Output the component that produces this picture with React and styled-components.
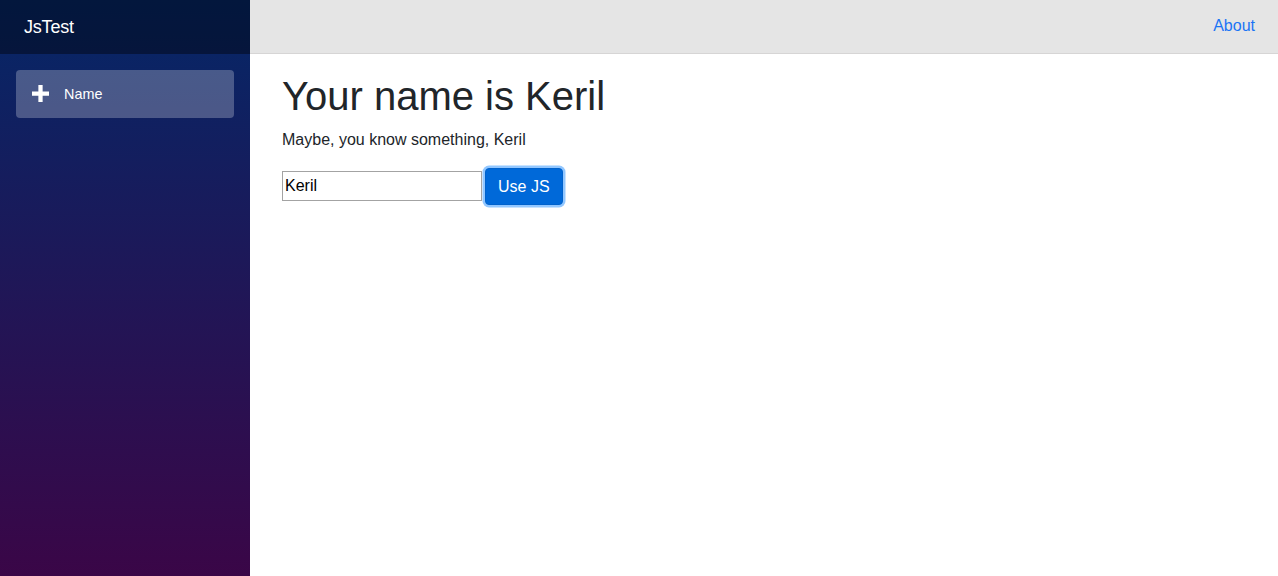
import React, { useState } from 'react'
import styled, { createGlobalStyle } from 'styled-components'

const GlobalStyle = createGlobalStyle`
    html, body {
        margin: 0;
        padding: 0;
        height: 100%;
    }

    body {
        font-family: "Liberation Sans", Arial, sans-serif;
        color: #212529;
        background: #fff;
    }

    #root {
        height: 100%;
    }
`

export default function App() {
    const [name, setName] = useState('Keril')

    return (
        <Page>
            <GlobalStyle />
            <Sidebar>
                <BrandRow>
                    <Brand href="#">JsTest</Brand>
                </BrandRow>
                <Nav>
                    <NavItem>
                        <NavLink href="#" $active>
                            <PlusIcon viewBox="0 0 8 8">
                                <path d="M3 0v3h-3v2h3v3h2v-3h3v-2h-3v-3h-2z" fill="currentColor" />
                            </PlusIcon>
                            Name
                        </NavLink>
                    </NavItem>
                </Nav>
            </Sidebar>

            <Main>
                <TopRow>
                    <AboutLink href="#">About</AboutLink>
                </TopRow>
                <Content>
                    <Heading>Your name is {name}</Heading>
                    <Lead>Maybe, you know something, {name}</Lead>
                    <Form>
                        <NameInput value={name} onChange={e => setName(e.target.value)} />
                        <PrimaryButton type="button">Use JS</PrimaryButton>
                    </Form>
                </Content>
            </Main>
        </Page>
    )
}

const Page = styled.div`
    display: flex;
    height: 100vh;
    overflow: hidden;
`

const Sidebar = styled.div`
    width: 250px;
    flex-shrink: 0;
    display: flex;
    flex-direction: column;
    background-image: linear-gradient(180deg, rgb(5, 39, 103) 0%, #3a0647 100%);
`

const BrandRow = styled.div`
    height: 54px;
    display: flex;
    align-items: center;
    padding-left: 24px;
    background-color: rgba(0, 0, 0, 0.4);
`

const Brand = styled.a`
    color: #fff;
    font-size: 18px;
    letter-spacing: -0.2px;
    text-decoration: none;
`

const Nav = styled.ul`
    list-style: none;
    margin: 0;
    padding: 16px 16px 8px;
`

const NavItem = styled.li`
    font-size: 14.4px;
`

const NavLink = styled.a`
    display: flex;
    align-items: center;
    height: 48px;
    padding-left: 16px;
    border-radius: 4px;
    color: ${({ $active }) => ($active ? '#fff' : '#d7d7d7')};
    background: ${({ $active }) => ($active ? 'rgba(255, 255, 255, 0.25)' : 'none')};
    text-decoration: none;
`

const PlusIcon = styled.svg`
    width: 17px;
    height: 17px;
    margin-right: 15px;
    margin-top: -1px;
    color: #fff;
`

const Main = styled.div`
    flex: 1;
    display: flex;
    flex-direction: column;
    min-width: 0;
`

const TopRow = styled.div`
    height: 54px;
    box-sizing: border-box;
    display: flex;
    align-items: center;
    justify-content: flex-end;
    padding: 0 23px 2px;
    background: #e5e5e5;
    border-bottom: 1px solid #d6d5d5;
`

const AboutLink = styled.a`
    color: #1b74f5;
    font-size: 16px;
    text-decoration: none;
`

const Content = styled.article`
    padding: 18px 32px 0;
`

const Heading = styled.h1`
    margin: 0 0 8px;
    font-size: 40px;
    font-weight: 400;
    line-height: 48px;
    color: #212529;
`

const Lead = styled.p`
    margin: 0 0 16px;
    font-size: 16px;
    line-height: 24px;
    color: #212529;
`

const Form = styled.div`
    display: flex;
    align-items: center;
    gap: 3px;
`

const NameInput = styled.input`
    width: 200px;
    height: 30px;
    box-sizing: border-box;
    margin-top: -1px;
    padding: 1px 2px;
    border: 1px solid #a3a3a3;
    font-family: "Liberation Sans", Arial, sans-serif;
    font-size: 16px;
    color: #000;
    outline: none;
`

const PrimaryButton = styled.button`
    height: 37px;
    margin: 0;
    padding: 0 12px;
    font-family: "Liberation Sans", Arial, sans-serif;
    font-size: 16px;
    color: #fff;
    background: #0069d9;
    border: 1px solid #0062cc;
    border-radius: 4px;
    box-shadow: 0 0 0 2.5px rgba(38, 143, 255, 0.5);
    cursor: pointer;
`
